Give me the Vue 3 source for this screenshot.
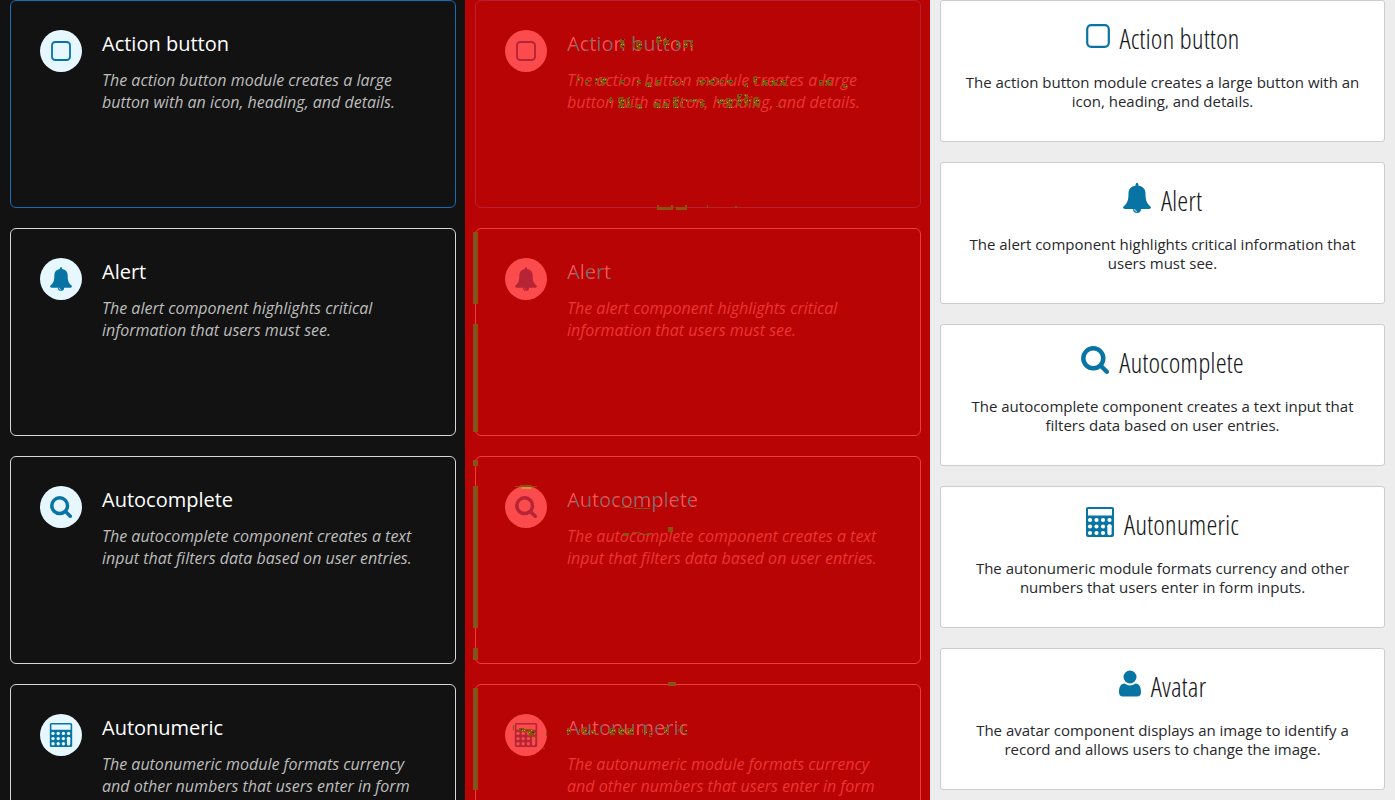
<script setup>
const modules = [
  { icon: 'square', title: 'Action button', text: 'The action button module creates a large button with an icon, heading, and details.' },
  { icon: 'bell', title: 'Alert', text: 'The alert component highlights critical information that users must see.' },
  { icon: 'search', title: 'Autocomplete', text: 'The autocomplete component creates a text input that filters data based on user entries.' },
  { icon: 'calc', title: 'Autonumeric', text: 'The autonumeric module formats currency and other numbers that users enter in form inputs.' },
]
const panels = ['dark', 'diff']
const cards = [
  ...modules,
  { icon: 'user', title: 'Avatar', text: 'The avatar component displays an image to identify a record and allows users to change the image.' },
]

// Runs of changed pixels: x, y, width, height
const bars = [
  [8, 232, 5, 72], [8, 324, 5, 108], [8, 460, 5, 6], [8, 486, 5, 142],
  [8, 648, 5, 12], [8, 688, 5, 102],
]
const lines = [
  [192, 207, 16, 3], [192, 205, 2, 3], [206, 205, 2, 2], [211, 207, 11, 3], [220, 205, 2, 3],
  [242, 205, 1, 3], [270, 206, 2, 2], [50, 486, 22, 1], [55, 485, 12, 1],
  [156, 507, 12, 1], [169, 508, 16, 1], [203, 527, 5, 5], [203, 682, 8, 4],
  [158, 533, 6, 3], [167, 532, 8, 1], [174, 534, 8, 1], [182, 533, 4, 2],
  [48, 725, 1, 5], [60, 729, 7, 1], [56, 731, 8, 1], [66, 732, 6, 1], [66, 736, 6, 1], [81, 730, 1, 6], [78, 748, 2, 1],
]
const specks = [
  [52, 728, 8, 3], [60, 730, 8, 6], [67, 732, 5, 4],
  [155, 39, 7, 9], [168, 41, 9, 9], [191, 36, 5, 8], [198, 39, 8, 6], [211, 42, 5, 6], [219, 40, 9, 8],
  [112, 76, 5, 5], [120, 80, 6, 5], [130, 78, 12, 7], [155, 80, 6, 4], [172, 80, 4, 4], [181, 82, 6, 5],
  [191, 80, 6, 5], [204, 81, 14, 4], [231, 80, 17, 5], [248, 78, 6, 7], [256, 80, 15, 4], [278, 83, 5, 4],
  [286, 76, 6, 8], [295, 80, 8, 6], [305, 80, 17, 6], [354, 80, 14, 6], [377, 84, 5, 4],
  [142, 97, 5, 6], [153, 97, 12, 11], [166, 103, 5, 4], [172, 104, 5, 5], [189, 102, 15, 6],
  [208, 97, 10, 11], [221, 99, 14, 3], [235, 101, 5, 6], [251, 99, 8, 5], [261, 98, 9, 10],
  [272, 94, 11, 12], [284, 97, 11, 10], [311, 105, 5, 2],
  [102, 728, 5, 6], [114, 727, 8, 7], [124, 730, 6, 4], [142, 728, 16, 7], [158, 728, 12, 7],
  [177, 727, 5, 6], [184, 731, 5, 6], [199, 727, 4, 6], [213, 725, 5, 7], [220, 730, 2, 4],
]
</script>

<template>
  <main class="page">
    <svg class="defs" aria-hidden="true">
      <symbol id="square" viewBox="0 0 24 24"><rect x="1.200" y="1.200" width="21.600" height="21.600" rx="4" fill="none" stroke="currentColor" stroke-width="2.200" /></symbol>
      <symbol id="bell" viewBox="0 0 28 30">
        <path fill="currentColor" d="M12.600 1.400q0-1.400 1.400-1.400t1.400 1.400l-.1 1C20 3.200 22.500 6 22.500 10.500C22.500 18 24 20.500 28 24q0 2-2 2H18a4 4 0 0 1-8 0H2q-2 0-2-2C4 20.500 5.500 18 5.500 10.500C5.500 6 8 3.200 12.700 2.400z" />
        <path class="cut" fill="none" stroke-width=".8" d="M11.500 26q.2 2.400 2.500 2.600" />
      </symbol>
      <symbol id="search" viewBox="0 0 28 28"><circle cx="12.300" cy="12.300" r="10" fill="none" stroke="currentColor" stroke-width="4.400" /><path d="m20 20 5.800 5.800" stroke="currentColor" stroke-width="4.400" stroke-linecap="round" /></symbol>
      <symbol id="calc" viewBox="0 0 28 30">
        <path fill="currentColor" fill-rule="evenodd" d="M2 0h24q2 0 2 2v26q0 2-2 2H2q-2 0-2-2V2Q0 0 2 0zM2 2v6.500h24V2z" />
        <g class="hole"><circle v-for="n in 11" :key="n" :cx="4 + ((n - 1) % 4) * 6.500" :cy="13 + Math.floor((n - 1) / 4) * 6.500" r="2.100" /><rect x="21.400" y="17.200" width="4.200" height="11" rx="2" /></g>
      </symbol>
      <symbol id="user" viewBox="3 0 22 27"><circle cx="14" cy="7" r="6.500" fill="currentColor" /><path fill="currentColor" d="M3 22c0-5 2-8.500 5.500-8.500q5.500 4 11 0C23 13.500 25 17 25 22q0 4.500-4 4.500H7q-4 0-4-4.500z" /></symbol>
    </svg>

    <section v-for="panel in panels" :key="panel" class="panel" :class="panel">
      <article v-for="m in modules" :key="m.title" class="module">
        <span class="badge"><svg class="glyph" :class="'glyph-' + m.icon" aria-hidden="true"><use :href="'#' + m.icon" /></svg></span>
        <div class="body">
          <h2><span>{{ m.title }}</span></h2>
          <p>{{ m.text }}</p>
        </div>
      </article>
      <svg v-if="panel === 'diff'" class="marks" aria-hidden="true">
        <defs>
          <pattern id="grain" width="9" height="7" patternUnits="userSpaceOnUse">
            <path fill="#8b5209" d="M0 0h5v1h2v4H6v2H1V5H0z" />
            <path fill="#35250a" d="M2 1h1v1H2zM4 4h2v1H4z" />
            <path fill="#d99340" d="M3 2h1v1H3zM1 4h1v1H1zM5 2h1v1H5z" />
          </pattern>
        </defs>
        <rect v-for="(r, i) in bars" :key="'b' + i" :x="r[0]" :y="r[1]" :width="r[2]" :height="r[3]" fill="#8b5209" />
        <rect v-for="(r, i) in bars" :key="'c' + i" :x="r[0] + 2" :y="r[1] + 2" width="1" :height="r[3] - 4" fill="#625861" />
        <rect v-for="(r, i) in lines" :key="'l' + i" :x="r[0]" :y="r[1]" :width="r[2]" :height="r[3]" fill="#8b5209" />
        <rect x="57" y="487" width="9" height="2" fill="#d99340" />
        <rect v-for="(r, i) in specks" :key="'s' + i" :x="r[0]" :y="r[1]" :width="r[2]" :height="r[3]" fill="url(#grain)" />
      </svg>
    </section>

    <section class="panel light">
      <article v-for="m in cards" :key="m.title" class="card">
        <h2><svg class="icon" :class="'icon-' + m.icon" aria-hidden="true"><use :href="'#' + m.icon" /></svg><span>{{ m.title }}</span></h2>
        <p>{{ m.text }}</p>
      </article>
    </section>
  </main>
</template>

<style>
body { margin: 0; }
</style>

<style scoped>
.page { display: grid; grid-template-columns: repeat(3, 1fr); height: 100vh; overflow: hidden; font-family: "Open Sans", "Noto Sans", sans-serif; }
.defs { position: absolute; width: 0; height: 0; }
.panel { position: relative; display: flex; flex-direction: column; gap: 20px; padding: 0 9px 0 10px; }
h2, p { margin: 0; font-weight: 400; }
.module { display: flex; flex-shrink: 0; gap: 20px; align-items: flex-start; box-sizing: border-box; min-height: 208px; padding: 29px; border: 1px solid #d6d6d6; border-radius: 6px; }
.badge { display: flex; flex: none; align-items: center; justify-content: center; width: 42px; height: 42px; border-radius: 50%; background: #e6f7ff; color: #0874a4; }
.glyph { width: 22px; height: 24px; }
.glyph-square { width: 20px; height: 20px; }
.glyph-calc { width: 24px; height: 24px; }
.body { flex: 1; }
.module h2 { font-size: 20px; line-height: 28px; color: #fff; }
.module p { margin-top: 11px; font-size: 16px; line-height: 22px; font-style: italic; color: #bdbdbd; }
.hole { fill: var(--hole); }
.cut { stroke: var(--hole); }
.dark { --hole: #e6f7ff; background: #121212; }
.dark .module:first-of-type { border-color: #176db8; }
.diff { --hole: #fc4b4c; background: #b80404; }
.diff .module { border-color: #f03c3c; }
.diff .module:first-of-type { border-color: #b81f33; }
.diff .badge { background: #fc4b4c; color: #b62435; }
.diff .module h2 span { color: transparent; background: repeating-linear-gradient(100deg, #806a70 0 4px, #ff5050 6px 9px, #806a70 11px); background-clip: text; }
.diff .module p { color: #ec3535; }
.marks { position: absolute; left: 0; top: 0; width: 100%; height: 100%; }
.light { --hole: #fff; padding: 0 10px; background: #ededed; }
.card { flex-shrink: 0; box-sizing: border-box; min-height: 142px; padding: 18px 24px; border: 1px solid #cbcccf; border-radius: 3px; background: #fff; text-align: center; color: #27282c; }
.card h2 { display: flex; justify-content: center; align-items: center; gap: 10px; font-family: "Open Sans Condensed Light", "Open Sans Light Condensed", "Roboto Condensed", "Noto Sans Condensed", "Lato", sans-serif; font-weight: 300; font-size: 28px; line-height: 38px; color: #18191c; }
.icon { width: 28px; height: 30px; margin-bottom: 5px; color: #0874a4; }
.icon-square { width: 24px; height: 24px; }
.icon-user { width: 22px; height: 27px; }
.card p { margin-top: 16px; font-size: 15px; line-height: 19px; }
</style>
